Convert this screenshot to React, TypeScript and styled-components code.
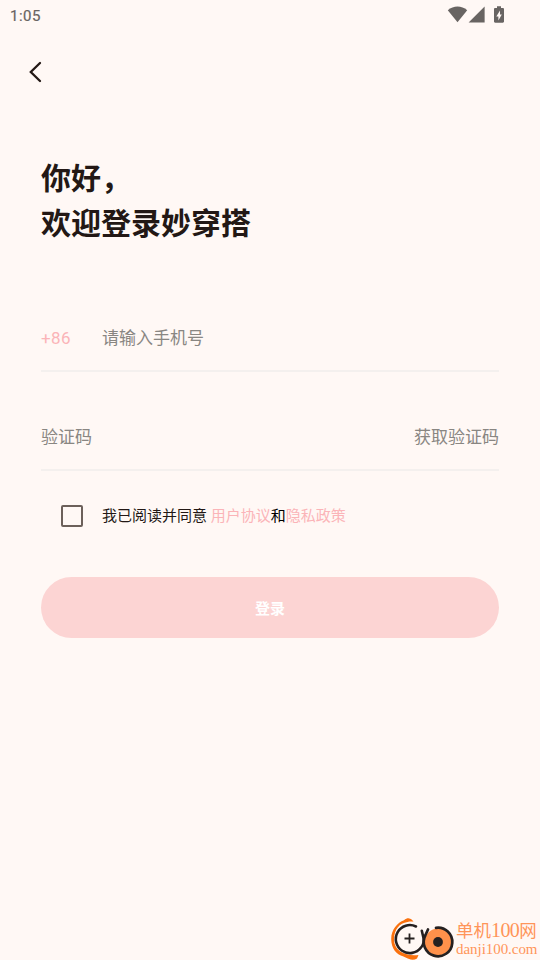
import React, { useState } from 'react';
import styled, { createGlobalStyle } from 'styled-components';

const GlobalStyle = createGlobalStyle`
  * { box-sizing: border-box; }
  html, body { margin: 0; padding: 0; background: #fff8f5; }
  body { font-family: Roboto, "Noto Sans CJK SC", sans-serif; color: #231815; }
  button, input { font: inherit; border: 0; padding: 0; margin: 0; background: none; outline: 0; }
`;

const Screen = styled.main`
  position: relative;
  width: 540px;
  height: 960px;
  overflow: hidden;
  display: flex;
  flex-direction: column;
  background: #fff8f5;
`;

const StatusBar = styled.header`
  height: 32px;
  flex: none;
  display: flex;
  justify-content: space-between;
  padding: 0 35px 0 10px;
  color: #686462;
`;

const Clock = styled.span`
  font-size: 15px;
  font-weight: 400;
  -webkit-text-stroke: 0.2px #686462;
  line-height: 32px;
  letter-spacing: 0.5px;
`;

const StatusIcons = styled.svg`
  width: 58px;
  height: 32px;
  display: block;
`;

const NavBar = styled.nav`
  height: 80px;
  flex: none;
  padding: 28px 0 0 24px;
`;

const BackButton = styled.button`
  width: 24px;
  height: 24px;
  display: block;
  svg { display: block; }
`;

const Content = styled.section`
  display: flex;
  flex-direction: column;
  padding: 44px 41px 0;
`;

const Title = styled.h1`
  margin: 0;
  height: 90px;
  font-size: 30px;
  font-weight: 700;
  line-height: 45px;
`;

const Field = styled.div<{ $gap: number }>`
  display: flex;
  align-items: center;
  height: 66px;
  margin-top: ${(p) => p.$gap}px;
  border-bottom: 2px solid #f4f0ee;
  font-size: 17px;
  line-height: 25px;
`;

const CountryCode = styled.span`
  width: 61px;
  color: #fbb4b8;
  letter-spacing: 0.35px;
`;

const Input = styled.input`
  flex: 1;
  min-width: 0;
  height: 25px;
  color: #231815;
  &::placeholder { color: #898682; opacity: 1; }
`;

const CodeButton = styled.button`
  color: #898682;
`;

const Agreement = styled.label`
  display: flex;
  align-items: center;
  height: 24px;
  margin-top: 33px;
  padding-left: 20px;
  font-size: 15px;
  line-height: 24px;
`;

const CheckBox = styled.input`
  appearance: none;
  width: 22px;
  height: 22px;
  margin-right: 19px;
  border: 2px solid #6c605a;
  border-radius: 2px;
  &:checked { background: #fbb4b8; }
`;

const AgreementText = styled.span`
  white-space: pre;
`;

const Policy = styled.span`
  color: #fbb4b8;
`;

const Joiner = styled.span`
  color: #000;
`;

const LoginButton = styled.button`
  height: 61px;
  margin-top: 49px;
  border-radius: 31px;
  background: #fcd4d3;
  color: #fff;
  font-size: 15px;
  font-weight: 700;
  line-height: 24px;
  padding-top: 3px;
`;

const Watermark = styled.aside`
  position: absolute;
  right: 0;
  bottom: 0;
  width: 150px;
  height: 44px;
  display: flex;
`;

const WatermarkLogo = styled.svg`
  width: 66px;
  height: 44px;
  flex: none;
`;

const WatermarkText = styled.div`
  display: flex;
  flex-direction: column;
  color: #ff9559;
  font-family: "Liberation Serif", "Noto Sans CJK SC", serif;
  white-space: nowrap;
`;

const SiteName = styled.span`
  height: 25px;
  font-size: 17.5px;
  line-height: 30px;
`;

const SiteNumber = styled.span`
  font-size: 20px;
  letter-spacing: -0.6px;
  line-height: 1;
`;

const SiteUrl = styled.span`
  height: 17px;
  font-size: 15px;
  line-height: 17px;
  letter-spacing: -0.05px;
`;

export default function App() {
  const [phone, setPhone] = useState('');
  const [code, setCode] = useState('');

  return (
    <Screen>
      <GlobalStyle />
      <StatusBar>
        <Clock>1:05</Clock>
        <StatusIcons viewBox="0 0 58 32" fill="#686462" aria-hidden>
          <path d="M.8 10.2C6.5 5.4 14.500 5.400 20.200 10.200L10.500 22.300Z" />
          <path d="M37.600 6.400V22.400H21.600Z" />
          <path d="M50 6.200h4V8h1.800c.7 0 1.200.5 1.200 1.200v12.300c0 .7-.5 1.200-1.200 1.200h-7.600c-.7 0-1.200-.5-1.200-1.200V9.200C47 8.500 47.500 8 48.200 8H50Z" />
          <path d="M53 10.500 49.300 16.400h2.100v4.200l3.400-6H53Z" fill="#fff8f5" />
        </StatusIcons>
      </StatusBar>
      <NavBar>
        <BackButton aria-label="返回">
          <svg width="24" height="24" viewBox="0 0 24 24" fill="none" stroke="#231815" strokeWidth="2.300" strokeLinecap="round">
            <path d="M16 3 6.800 12 16 21" />
          </svg>
        </BackButton>
      </NavBar>
      <Content>
        <Title>你好，<br />欢迎登录妙穿搭</Title>
        <Field $gap={60}>
          <CountryCode>+86</CountryCode>
          <Input placeholder="请输入手机号" value={phone} onChange={(e) => setPhone(e.target.value)} />
        </Field>
        <Field $gap={33}>
          <Input placeholder="验证码" value={code} onChange={(e) => setCode(e.target.value)} />
          <CodeButton>获取验证码</CodeButton>
        </Field>
        <Agreement>
          <CheckBox type="checkbox" />
          <AgreementText>
            我已阅读并同意 <Policy>用户协议</Policy><Joiner>和</Joiner><Policy>隐私政策</Policy>
          </AgreementText>
        </Agreement>
        <LoginButton>登录</LoginButton>
      </Content>
      <Watermark>
        <WatermarkLogo viewBox="0 0 66 44" fill="none">
          <path d="M22 3.800C19.500 1.600 17 1.700 14 4.200C7.500 6.500 1.200 13.500 1.200 23C1.200 32 6 38.500 13.500 40.500C19 43.500 23 45 27 42.500L28.500 39C14 40.500 4 34 4 23.500C4 13.500 9.500 7 17.500 6C20 5.500 22 5.500 23.500 5.800Z" fill="#fa710e" />
          <circle cx="19.500" cy="23" r="14" fill="#fff8f5" />
          <path d="M26 10.500A14 14 0 1 0 31 31.500Q35 27 33.500 22L31.800 14.800" stroke="#252020" strokeWidth="2.600" strokeLinecap="round" />
          <path d="M14.500 22.500h10M19.500 17.500v10" stroke="#252020" strokeWidth="1.800" />
          <circle cx="48" cy="26" r="13.500" fill="#ff914b" />
          <path d="M46 11.800A14.300 14.300 0 1 1 35.500 19L38 13.500" stroke="#252020" strokeWidth="2.700" strokeLinecap="round" />
          <circle cx="48" cy="26" r="4.900" fill="#252020" />
        </WatermarkLogo>
        <WatermarkText>
          <SiteName>单机<SiteNumber>100</SiteNumber>网</SiteName>
          <SiteUrl>danji100.com</SiteUrl>
        </WatermarkText>
      </Watermark>
    </Screen>
  );
}
